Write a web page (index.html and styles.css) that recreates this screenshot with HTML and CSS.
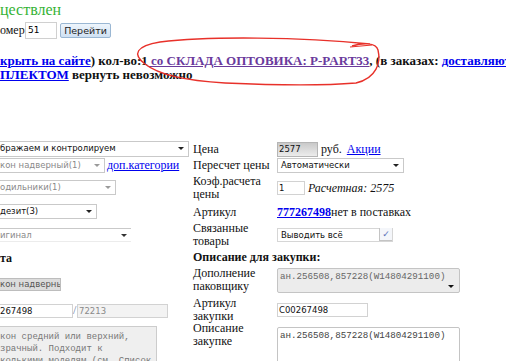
FILE: index.html
```html
<!DOCTYPE html>
<html lang="ru">
<head>
    <meta charset="UTF-8">
    <title>Редактирование товара</title>
    <link rel="stylesheet" href="styles.css">
</head>
<body>
    <div class="status">цествлен</div>
    <form class="goto">
        <span class="goto-label">омер:</span>
        <input class="goto-num" type="text" value="51">
        <button type="button" class="goto-btn">Перейти</button>
    </form>
    <div class="info">
        <p class="info-line"><a href="#" class="lnk">крыть на сайте</a>) кол-во:1<a href="#" class="lnk visited"> со СКЛАДА ОПТОВИКА: P-PART33</a>, (в заказах: <a href="#" class="lnk">доставляются</a>)</p>
        <p class="info-line"><a href="#" class="lnk">ПЛЕКТОМ</a> вернуть невозможно</p>
    </div>

    <div class="editor">
        <div class="left">
            <div class="pick w189"><span>бражаем и контролируем</span><i class="arr"></i></div>
            <div class="left-row">
                <div class="pick w105 dim"><span>кон надверный(1)</span><i class="arr"></i></div>
                <a href="#" class="cat-link">доп.категории</a>
            </div>
            <div class="pick w116 dim gap7"><span>одильники(1)</span><i class="arr"></i></div>
            <div class="pick w97 gap9"><span>дезит(3)</span><i class="arr"></i></div>
            <div class="pick w131 dim flat gap9"><span>игинал</span><i class="arr"></i></div>
            <div class="left-title">та</div>
            <div class="grey-btn">кон надверны</div>
            <div class="left-row codes">
                <input class="box-in w73" type="text" value="267498">
                <span class="slash">/</span>
                <input class="box-in w91 dim-in" type="text" value="72213">
            </div>
            <div class="memo">кон средний или верхний,
зрачный. Подходит к
колькими моделям (см. Список</div>
        </div>

        <div class="right">
            <div class="row r1">
                <span class="lbl">Цена</span>
                <input class="price" type="text" value="2577">
                <span class="txt">&nbsp;руб. <a href="#" class="cat-link">Акции</a></span>
            </div>
            <div class="row r2">
                <span class="lbl">Пересчет цены</span>
                <div class="pick w127 full"><span>Автоматически</span><i class="arr"></i></div>
            </div>
            <div class="row r3">
                <span class="lbl">Коэф.расчета<br>цены</span>
                <input class="box-in full w28" type="text" value="1">
                <span class="txt calc">Расчетная: 2575</span>
            </div>
            <div class="row r4">
                <span class="lbl">Артикул</span>
                <a href="#" class="art-link">777267498</a><span class="txt">нет в поставках</span>
            </div>
            <div class="row r5">
                <span class="lbl">Связанные<br>товары</span>
                <div class="multi"><span>Выводить всё</span><i class="tick">&#10003;</i></div>
            </div>
            <div class="row r6">
                <span class="head">Описание для закупки:</span>
            </div>
            <div class="row r7">
                <span class="lbl">Дополнение<br>паковщику</span>
                <div class="area grey">ан.256508,857228(W14804291100)<i class="corner"></i></div>
            </div>
            <div class="row r8">
                <span class="lbl">Артикул<br>закупки</span>
                <input class="box-in full w91" type="text" value="C00267498">
            </div>
            <div class="row r9">
                <span class="lbl">Описание<br>закупке</span>
                <div class="area white">ан.256508,857228(W14804291100)</div>
            </div>
        </div>
    </div>

    <svg class="mark" width="506" height="100" viewBox="0 0 506 100">
        <path d="M352 46 C362 43 376 42 378 50 C381 62 377 78 356 83 C320 86 270 85 225 83 C190 81 160 76 145 64 C132 54 136 46 160 42 C210 36 300 37 370 44" fill="none" stroke="#e8312a" stroke-width="1.4"/>
        <path d="M350 47 L372 45" fill="none" stroke="#e8312a" stroke-width="1.2"/>
    </svg>
</body>
</html>
```

FILE: styles.css
```css
body {
    margin: 0;
    width: 506px;
    height: 361px;
    overflow: hidden;
    position: relative;
    background-color: #ffffff;
    color: #111111;
    font-family: "Liberation Serif", "Times New Roman", serif;
    font-size: 12px;
}
a {
    color: #0000ee;
}
.status {
    height: 20px;
    line-height: 20px;
    font-size: 16px;
    color: #36b336;
}
.goto {
    display: flex;
    align-items: center;
    height: 18px;
    margin: 1px 0 0 0;
}
.goto-label {
    width: 25px;
}
.goto-num {
    width: 32px;
    height: 17px;
    box-sizing: border-box;
    border: 1px solid #d0d0d0;
    padding: 0 2px;
    margin: 0;
    font-family: "DejaVu Sans", sans-serif;
    font-size: 9px;
}
.goto-btn {
    width: 51px;
    height: 15px;
    margin: 0 0 0 3px;
    padding: 0;
    border: 1px solid #9ab7d3;
    border-radius: 2px;
    background: linear-gradient(#eef5fc, #cfe1f3);
    font-family: "DejaVu Sans", sans-serif;
    font-size: 9.5px;
    color: #222222;
}
.info {
    margin-top: 15px;
    font-weight: bold;
    font-size: 13px;
    line-height: 14px;
}
.info-line {
    margin: 0;
    white-space: nowrap;
}
.lnk.visited {
    color: #6a3a9c;
}
.editor {
    display: flex;
    margin-top: 59px;
}
.left {
    width: 193px;
    display: flex;
    flex-direction: column;
    align-items: flex-start;
}
.right {
    width: 313px;
    display: flex;
    flex-direction: column;
}

/* select look-alike */
.pick {
    position: relative;
    height: 15px;
    box-sizing: border-box;
    border: 1px solid #c9c9c9;
    border-left: none;
    background-color: #ffffff;
    font-family: "DejaVu Sans", sans-serif;
    font-size: 8.5px;
    line-height: 13px;
    color: #111111;
    white-space: nowrap;
    overflow: hidden;
}
.pick.full {
    border-left: 1px solid #c9c9c9;
    padding-left: 3px;
}
.pick .arr {
    position: absolute;
    right: 4px;
    top: 5px;
    width: 0;
    height: 0;
    border-left: 3px solid transparent;
    border-right: 3px solid transparent;
    border-top: 3px solid #222222;
}
.pick.dim {
    color: #8a8a8a;
}
.pick.dim .arr {
    border-top-color: #9a9a9a;
}
.pick.flat {
    border-bottom-color: #ececec;
    border-right: none;
    height: 14px;
}
.pick.flat .arr {
    border-top-color: #333333;
}
.w189 { width: 189px; height: 16px; }
.w105 { width: 105px; }
.w116 { width: 116px; }
.w97 { width: 97px; }
.w131 { width: 131px; }
.w127 { width: 127px; }
.w73 { width: 73px; }
.w91 { width: 91px; }
.w28 { width: 28px; }
.gap7 { margin-top: 7px; }
.gap9 { margin-top: 9px; }
.left-row {
    display: flex;
    align-items: center;
    margin-top: 1px;
}
.cat-link {
    margin-left: 2px;
    font-size: 12px;
}
.left-title {
    margin-top: 10px;
    height: 13px;
    line-height: 13px;
    font-weight: bold;
}
.grey-btn {
    margin-top: 13px;
    width: 61px;
    height: 13px;
    box-sizing: border-box;
    border: 1px solid #bdbdbd;
    border-left: none;
    background-color: #dcdcdc;
    font-family: "DejaVu Sans", sans-serif;
    font-size: 8.5px;
    line-height: 11px;
    color: #555555;
    white-space: nowrap;
    overflow: hidden;
}
.codes {
    margin-top: 12px;
}
.box-in {
    height: 14px;
    box-sizing: border-box;
    border: 1px solid #d2d2d2;
    border-left: none;
    padding: 0;
    margin: 0;
    font-family: "DejaVu Sans", sans-serif;
    font-size: 8.5px;
    color: #111111;
    background-color: #ffffff;
}
.box-in.full {
    border-left: 1px solid #d2d2d2;
    padding-left: 1px;
}
.slash {
    width: 4px;
    color: #6a7fa8;
    font-size: 12px;
}
.dim-in {
    border-left: 1px solid #d2d2d2;
    background-color: #f3f3f3;
    color: #8a8a8a;
    padding-left: 1px;
}
.memo {
    margin-top: 8px;
    width: 157px;
    height: 60px;
    box-sizing: border-box;
    border: 1px solid #cccccc;
    border-left: none;
    background-color: #efefef;
    padding-top: 4px;
    font-family: "Liberation Mono", monospace;
    font-size: 9px;
    line-height: 12px;
    color: #777777;
    white-space: pre;
    overflow: hidden;
}

/* right table */
.row {
    display: flex;
    align-items: center;
}
.lbl {
    width: 84px;
    flex: none;
    line-height: 13px;
}
.txt {
    white-space: nowrap;
}
.calc {
    margin-left: 3px;
    font-style: italic;
}
.r1 { height: 16px; }
.r2 { height: 15px; margin-top: 1px; }
.r3 { height: 26px; margin-top: 2px; }
.r4 { height: 19px; margin-top: 2px; }
.r5 { height: 26px; }
.r6 { height: 13px; margin-top: 3px; }
.r7 { height: 26px; margin-top: 3px; }
.r8 { height: 25px; margin-top: 4px; }
.r9 { align-items: flex-start; }
.price {
    width: 41px;
    height: 15px;
    box-sizing: border-box;
    border: 1px solid #b5b5b5;
    padding: 0 1px;
    margin: 0;
    background: linear-gradient(#c9c9c9, #ececec);
    font-family: "DejaVu Sans", sans-serif;
    font-size: 8.5px;
    color: #111111;
}
.art-link {
    font-weight: bold;
}
.multi {
    position: relative;
    width: 116px;
    height: 14px;
    box-sizing: border-box;
    border: 1px solid #d6d6d6;
    padding-left: 3px;
    font-family: "DejaVu Sans", sans-serif;
    font-size: 8.5px;
    line-height: 12px;
}
.tick {
    position: absolute;
    right: 0;
    top: -1px;
    width: 12px;
    height: 12px;
    border-left: 1px solid #c4c4c4;
    border-bottom: 1px solid #c4c4c4;
    background-color: #f4f6fa;
    color: #5a6fb8;
    font-style: normal;
    font-size: 9px;
    line-height: 12px;
    text-align: center;
}
.head {
    font-weight: bold;
    line-height: 13px;
}
.area {
    position: relative;
    width: 183px;
    box-sizing: border-box;
    border: 1px solid #c4c4c4;
    border-radius: 2px;
    padding: 2px 0 0 2px;
    font-family: "Liberation Mono", monospace;
    font-size: 9.2px;
    line-height: 12px;
    white-space: nowrap;
}
.area.grey {
    height: 25px;
    background-color: #ececec;
    color: #666666;
}
.area.white {
    margin-top: 5px;
    height: 60px;
    background-color: #ffffff;
    color: #444444;
}
.corner {
    position: absolute;
    right: 5px;
    bottom: 4px;
    width: 0;
    height: 0;
    border-left: 3px solid transparent;
    border-right: 3px solid transparent;
    border-top: 3px solid #111111;
}
.mark {
    position: absolute;
    left: 0;
    top: 0;
    pointer-events: none;
}
```
